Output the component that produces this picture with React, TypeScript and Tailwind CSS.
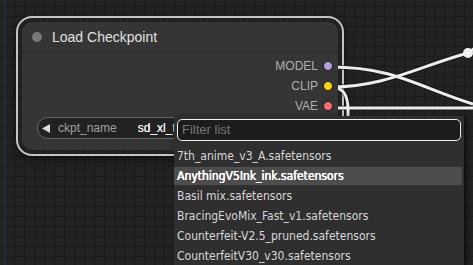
const outputs = [
  { name: 'MODEL', color: 'bg-[#b39ddb]' },
  { name: 'CLIP', color: 'bg-[#ffd500]' },
  { name: 'VAE', color: 'bg-[#ff6e6e]' },
]

const files = [
  '7th_anime_v3_A.safetensors',
  'AnythingV5Ink_ink.safetensors',
  'Basil mix.safetensors',
  'BracingEvoMix_Fast_v1.safetensors',
  'Counterfeit-V2.5_pruned.safetensors',
  'CounterfeitV30_v30.safetensors',
]

const wires = [
  'M331 67 C 395 67, 420 88, 473 104',
  'M331 87 C 385 87, 420 66, 468 53 L 476 47',
  'M331 87 C 344 87, 348 96, 348 110 L 348 150',
  'M331 108 L 476 108',
]

function Wires() {
  return (
    <svg className="absolute inset-0 z-10 pointer-events-none" width="473" height="265">
      {wires.map((d) => (
        <path key={d + 'b'} d={d} fill="none" stroke="#111" strokeOpacity="0.6" strokeWidth="5" />
      ))}
      {wires.map((d) => (
        <path key={d} d={d} fill="none" stroke="#ececec" strokeWidth="3" />
      ))}
      <circle cx="468" cy="53" r="5" fill="#f2f2f2" />
    </svg>
  )
}

function CheckpointNode() {
  return (
    <div className="absolute left-[16px] top-[16px] w-[328px] h-[140px] rounded-[16px] border-2 border-[#c4c4c4] p-[4px] shadow-[0_4px_10px_rgba(0,0,0,0.5)]">
      <div className="relative z-20 h-full rounded-[10px] bg-[#353535] flex flex-col">
        {/* title */}
        <div className="h-[31px] shrink-0 flex items-center border-b border-[#2a2a2a]">
          <div className="ml-[10px] w-[10px] h-[10px] rounded-full bg-[#777]" />
          <span className="ml-[10px] text-[14px] text-[#e0e0e0] font-['Liberation_Sans',sans-serif]">
            Load Checkpoint
          </span>
        </div>

        {/* outputs */}
        <div className="pt-[3px] flex flex-col">
          {outputs.map((o) => (
            <div key={o.name} className="h-[20px] flex items-center justify-end gap-[5px] pr-[5px]">
              <span className="text-[12px] text-[#b0b0b0] font-['Liberation_Sans',sans-serif]">{o.name}</span>
              <span className={`w-[10px] h-[10px] rounded-full border border-[#1e1e1e] ${o.color}`} />
            </div>
          ))}
        </div>

        {/* combo widget */}
        <div className="mt-[1px] mx-[15px] h-[22px] rounded-full border border-[#666] bg-[#222] flex items-center overflow-hidden font-['Liberation_Sans',sans-serif] text-[12px]">
          <svg className="ml-[4px] shrink-0" width="8" height="9" viewBox="0 0 8 9">
            <path d="M8 0 L0 4.5 L8 9 Z" fill="#ddd" />
          </svg>
          <span className="ml-[8px] text-[#a0a0a0] shrink-0">ckpt_name</span>
          <span className="ml-[21px] w-[39px] shrink-0 overflow-hidden whitespace-nowrap text-[#ececec] [text-shadow:0_0_0.4px_#fff]">
            sd_xl_turbo_1.0_fp16.safetensors
          </span>
        </div>
      </div>
    </div>
  )
}

function FilterMenu() {
  return (
    <div className="absolute z-30 left-[174px] top-[116px] w-[290px] h-[150px] bg-[#2f2f2f] shadow-[2px_2px_6px_rgba(0,0,0,0.6)] flex flex-col">
      <div className="mt-[3px] mx-[3px] h-[22px] shrink-0 rounded-[5px] border-[1.5px] border-[#eee] bg-[#1c1c1c] flex items-center pl-[4px]">
        <span className="text-[13px] text-[#777] font-['Liberation_Sans',sans-serif]">Filter list</span>
      </div>
      <div className="pt-[6px] flex flex-col gap-[2px] font-['DejaVu_Sans_Condensed','DejaVu_Sans',sans-serif] font-stretch-condensed text-[12px]">
        {files.map((f, i) => (
          <div
            key={f}
            className={`h-[18px] mr-[2px] pl-[3px] flex items-center whitespace-nowrap ${
              i === 1 ? 'bg-[#4d4d4d] text-white [text-shadow:0.4px_0_0_#fff,0_0_0.5px_#fff]' : 'text-[#d8d8d8]'
            }`}
          >
            {f}
          </div>
        ))}
      </div>
    </div>
  )
}

export default function App() {
  return (
    <div className="relative w-[473px] h-[265px] overflow-hidden bg-[#232323] bg-[linear-gradient(to_right,#1a1a1a_1px,transparent_1px),linear-gradient(to_bottom,#1a1a1a_1px,transparent_1px)] bg-[size:10px_10px] bg-[position:4px_6px]">
      <div className="absolute left-[4px] top-0 w-[2px] h-full bg-[#1d2a40]" />
      <Wires />
      <CheckpointNode />
      <FilterMenu />
    </div>
  )
}
